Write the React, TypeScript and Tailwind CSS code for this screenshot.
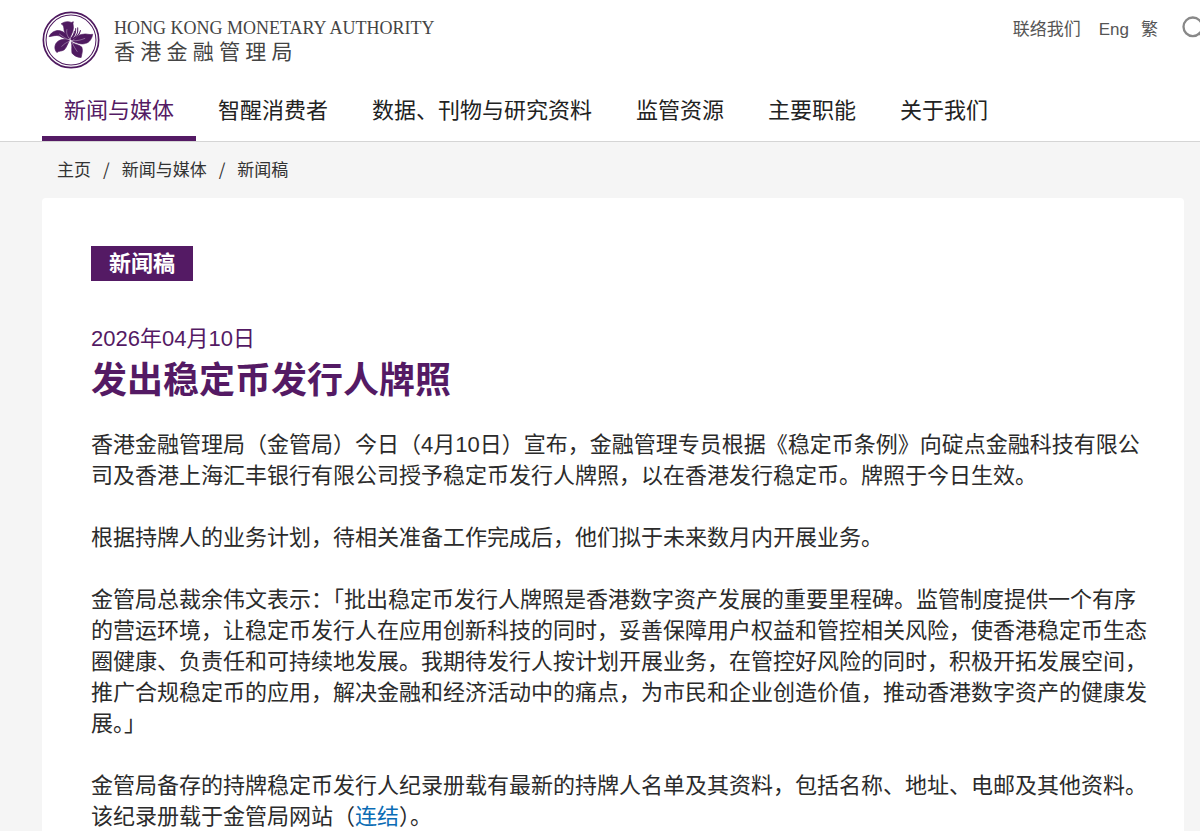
import { Search } from 'lucide-react'

interface NavItem {
  label: string
  active?: boolean
}

const navItems: NavItem[] = [
  { label: '新闻与媒体', active: true },
  { label: '智醒消费者' },
  { label: '数据、刊物与研究资料' },
  { label: '监管资源' },
  { label: '主要职能' },
  { label: '关于我们' },
]

const paragraphs = [
  '香港金融管理局（金管局）今日（4月10日）宣布，金融管理专员根据《稳定币条例》向碇点金融科技有限公司及香港上海汇丰银行有限公司授予稳定币发行人牌照，以在香港发行稳定币。牌照于今日生效。',
  '根据持牌人的业务计划，待相关准备工作完成后，他们拟于未来数月内开展业务。',
  '金管局总裁余伟文表示：「批出稳定币发行人牌照是香港数字资产发展的重要里程碑。监管制度提供一个有序的营运环境，让稳定币发行人在应用创新科技的同时，妥善保障用户权益和管控相关风险，使香港稳定币生态圈健康、负责任和可持续地发展。我期待发行人按计划开展业务，在管控好风险的同时，积极开拓发展空间，推广合规稳定币的应用，解决金融和经济活动中的痛点，为市民和企业创造价值，推动香港数字资产的健康发展。」',
]

function Emblem() {
  return (
    <svg viewBox="36 36 172 172" className="size-[58px] shrink-0" aria-hidden="true">
      <circle cx="122" cy="122" r="82" fill="none" stroke="#4f1a60" strokeWidth="5" />
      <circle cx="122" cy="122" r="74" fill="none" stroke="#4f1a60" strokeWidth="3" />
      <g fill="#4f1a60" stroke="#4f1a60" strokeWidth="2" strokeLinejoin="round">
        <path d="M119 117C109 110 101 100 101 88C101 80 97 77 93 74C102 67 114 66 123 70L129 68C126 74 130 80 129 88C128 98 122 107 119 117Z" />
        <path d="M118 120C106 119 96 115 88 110C78 106 66 111 57 112C62 101 72 94 85 94C98 95 111 105 118 120Z" />
        <path d="M118 123C112 132 110 143 102 151C94 156 86 154 80 159C72 150 73 138 79 130C87 120 106 117 118 123Z" />
        <path d="M123 127C131 136 146 135 154 143C158 153 154 163 152 174C142 174 131 169 125 161C123 150 126 139 123 127Z" />
        <path d="M126 125C136 119 143 105 158 105C168 102 176 108 186 105C185 116 177 130 165 132C154 136 140 132 126 125Z" />
      </g>
      <path
        d="M121 120C132 112 137 103 136 88M123 121C136 114 144 104 142 86M125 122C138 115 147 107 150 94M122 118C128 110 132 103 132 96"
        fill="none"
        stroke="#4f1a60"
        strokeWidth="3"
        strokeLinecap="round"
      />
      <path
        d="M121 122C112 113 107 103 110 90M119 122C108 120 98 112 87 104M120 124C108 130 100 134 94 142M123 125C130 140 135 149 141 157M126 124C140 125 152 122 164 117"
        fill="none"
        stroke="white"
        strokeWidth="1"
      />
    </svg>
  )
}

function Header() {
  return (
    <header className="border-b border-[#d5d5d5] bg-white pl-[42px]">
      <div className="flex items-start justify-between pt-[11px]">
        <a href="#" className="flex items-center gap-[14px] text-[#444]">
          <Emblem />
          <span className="flex flex-col">
            <span className="font-['Liberation_Serif',serif] text-[18px] leading-6">
              HONG KONG MONETARY AUTHORITY
            </span>
            <span
              lang="zh-Hant"
              className="font-['Liberation_Serif','Noto_Sans_CJK_TC',serif] text-[21px] leading-6"
            >
              香 港 金 融 管 理 局
            </span>
          </span>
        </a>
        <div className="-mr-2 flex items-start gap-[22px] pt-[3px]">
          <div className="flex pt-0.5 text-[17px] leading-7 text-[#555]">
            <a href="#">联络我们</a>
            <a href="#" className="ml-[18px]">Eng</a>
            <a href="#" className="ml-3">繁</a>
          </div>
          <button type="button" aria-label="搜索" className="text-[#888]">
            <Search className="size-7" />
          </button>
        </div>
      </div>
      <nav className="mt-[26px] flex">
        {navItems.map((item) => (
          <a
            key={item.label}
            href="#"
            className={`border-b-[5px] px-[22px] pb-[9px] text-[22px] leading-8 ${
              item.active ? 'border-[#541a64] text-[#541a64]' : 'border-transparent text-[#222]'
            }`}
          >
            {item.label}
          </a>
        ))}
      </nav>
    </header>
  )
}

function Breadcrumb() {
  return (
    <nav className="flex gap-3 pt-[13px] pb-[15px] pl-[57px] font-['Noto_Sans_CJK_SC',sans-serif] text-[17px] leading-7 text-[#333]">
      <a href="#">主页</a>
      <span>/</span>
      <a href="#">新闻与媒体</a>
      <span>/</span>
      <a href="#">新闻稿</a>
    </nav>
  )
}

export default function App() {
  return (
    <div
      lang="zh-Hans"
      className="flex min-h-screen flex-col overflow-hidden bg-[#f5f5f5] font-['Liberation_Sans','Noto_Sans_CJK_SC',sans-serif]"
    >
      <Header />
      <Breadcrumb />
      <main className="mr-4 ml-[42px] flex-1 rounded-t-sm bg-white pt-12 pr-8 pl-[49px]">
        <div className="flex">
          <span className="bg-[#541a64] px-[18px] pt-[1px] text-[22px] leading-[34px] font-bold text-white">
            新闻稿
          </span>
        </div>
        <p className="mt-[42px] text-[22px] leading-8 text-[#541a64]">2026年04月10日</p>
        <h1 className="text-[36px] leading-[52px] font-bold text-[#541a64]">发出稳定币发行人牌照</h1>
        <div className="mt-[22px] flex flex-col gap-[31px] text-[22px] leading-[31px] text-[#2b2b2b]">
          {paragraphs.map((text) => (
            <p key={text}>{text}</p>
          ))}
          <p>
            金管局备存的持牌稳定币发行人纪录册载有最新的持牌人名单及其资料，包括名称、地址、电邮及其他资料。该纪录册载于金管局网站（
            <a href="#" className="text-[#0b6cb5]">连结</a>
            ）。
          </p>
        </div>
      </main>
    </div>
  )
}
